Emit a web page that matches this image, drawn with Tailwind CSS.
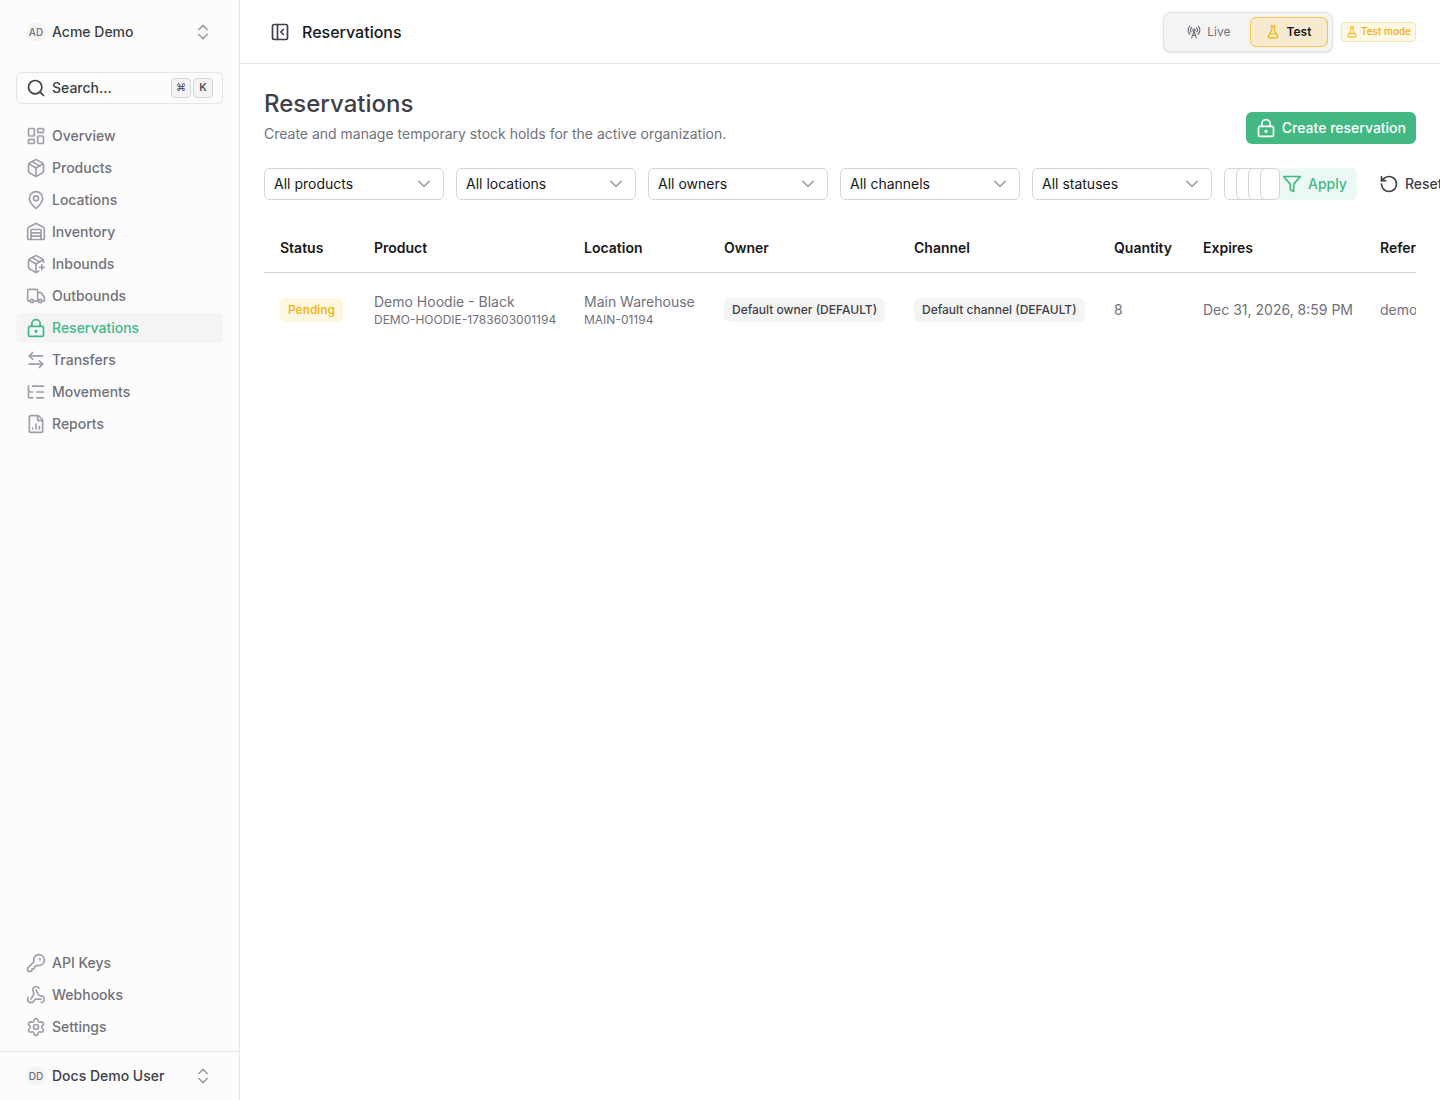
<!DOCTYPE html>
<html lang="en">
  <head>
    <meta charset="UTF-8" />
    <meta name="viewport" content="width=device-width, initial-scale=1.0" />
    <title>Reservations - Acme Demo</title>
    <script src="https://cdn.jsdelivr.net/npm/@tailwindcss/browser@4"></script>
  </head>

  <body class="flex h-screen overflow-hidden bg-white font-['Inter',sans-serif] text-sm text-zinc-500">
    <!-- Icon sprite -->
    <svg class="hidden" aria-hidden="true">
      <symbol id="chevrons" viewBox="0 0 24 24"><path d="m7 15 5 5 5-5" /><path d="m7 9 5-5 5 5" /></symbol>
      <symbol id="lock" viewBox="0 0 24 24"><circle cx="12" cy="16" r="1" /><rect x="3" y="10" width="18" height="12" rx="2" /><path d="M7 10V7a5 5 0 0 1 10 0v3" /></symbol>
      <symbol id="flask" viewBox="0 0 24 24"><path d="M14 2v6a2 2 0 0 0 .245.96l5.51 10.08A2 2 0 0 1 18 22H6a2 2 0 0 1-1.755-2.96l5.51-10.08A2 2 0 0 0 10 8V2" /><path d="M6.453 15h11.094" /><path d="M8.5 2h7" /></symbol>
      <symbol id="chevron-down" viewBox="0 0 24 24"><path d="m6 9 6 6 6-6" /></symbol>
    </svg>

    <!-- Sidebar -->
    <aside class="flex w-60 shrink-0 flex-col border-r border-zinc-200 bg-[#fcfcfc] font-medium">
      <div class="flex h-16 items-center px-4">
        <button type="button" class="flex w-full items-center gap-1.5 px-2.5 py-1.5 text-zinc-700">
          <span class="flex size-5 items-center justify-center rounded-full bg-zinc-100 text-[10px] text-zinc-500">AD</span>
          <span class="flex-1 text-left">Acme Demo</span>
          <svg class="size-5 fill-none stroke-zinc-400 stroke-2" stroke-linecap="round" stroke-linejoin="round"><use href="#chevrons" /></svg>
        </button>
      </div>

      <div class="flex flex-1 flex-col gap-4 px-4 py-2">
        <button type="button" class="flex h-8 items-center gap-1.5 rounded-md border border-zinc-200 px-[9px] text-zinc-700">
          <svg class="size-5 fill-none stroke-current stroke-2" stroke-linecap="round" stroke-linejoin="round" viewBox="0 0 24 24"><circle cx="11" cy="11" r="8" /><path d="m21 21-4.34-4.34" /></svg>
          <span class="flex-1 text-left">Search...</span>
          <span class="flex gap-0.5">
            <kbd class="flex size-5 items-center justify-center rounded-sm border border-zinc-300 bg-zinc-100 font-['DejaVu_Sans',sans-serif] text-[10px]">⌘</kbd>
            <kbd class="flex size-5 items-center justify-center rounded-sm border border-zinc-300 bg-zinc-100 font-['Inter',sans-serif] text-[11px]">K</kbd>
          </span>
        </button>

        <nav class="flex flex-col gap-0.5 pt-px">
          <a href="#" class="flex h-[30px] items-center gap-1.5 rounded-md px-2.5">
            <svg class="size-5 fill-none stroke-zinc-400 stroke-2" stroke-linecap="round" stroke-linejoin="round" viewBox="0 0 24 24"><rect width="7" height="9" x="3" y="3" rx="1" /><rect width="7" height="5" x="14" y="3" rx="1" /><rect width="7" height="9" x="14" y="12" rx="1" /><rect width="7" height="5" x="3" y="16" rx="1" /></svg>
            Overview
          </a>
          <a href="#" class="flex h-[30px] items-center gap-1.5 rounded-md px-2.5">
            <svg class="size-5 fill-none stroke-zinc-400 stroke-2" stroke-linecap="round" stroke-linejoin="round" viewBox="0 0 24 24"><path d="M11 21.73a2 2 0 0 0 2 0l7-4A2 2 0 0 0 21 16V8a2 2 0 0 0-1-1.73l-7-4a2 2 0 0 0-2 0l-7 4A2 2 0 0 0 3 8v8a2 2 0 0 0 1 1.73z" /><path d="M12 22V12" /><path d="M3.29 7 12 12l8.71-5" /><path d="m7.5 4.27 9 5.15" /></svg>
            Products
          </a>
          <a href="#" class="flex h-[30px] items-center gap-1.5 rounded-md px-2.5">
            <svg class="size-5 fill-none stroke-zinc-400 stroke-2" stroke-linecap="round" stroke-linejoin="round" viewBox="0 0 24 24"><path d="M20 10c0 4.993-5.539 10.193-7.399 11.799a1 1 0 0 1-1.202 0C9.539 20.193 4 14.993 4 10a8 8 0 0 1 16 0" /><circle cx="12" cy="10" r="3" /></svg>
            Locations
          </a>
          <a href="#" class="flex h-[30px] items-center gap-1.5 rounded-md px-2.5">
            <svg class="size-5 fill-none stroke-zinc-400 stroke-2" stroke-linecap="round" stroke-linejoin="round" viewBox="0 0 24 24"><path d="M18 21V10a1 1 0 0 0-1-1H7a1 1 0 0 0-1 1v11" /><path d="M22 19a2 2 0 0 1-2 2H4a2 2 0 0 1-2-2V8a2 2 0 0 1 1.132-1.803l7.95-3.974a2 2 0 0 1 1.837 0l7.948 3.974A2 2 0 0 1 22 8z" /><path d="M6 13h12" /><path d="M6 17h12" /></svg>
            Inventory
          </a>
          <a href="#" class="flex h-[30px] items-center gap-1.5 rounded-md px-2.5">
            <svg class="size-5 fill-none stroke-zinc-400 stroke-2" stroke-linecap="round" stroke-linejoin="round" viewBox="0 0 24 24"><path d="M16 16h6" /><path d="M19 13v6" /><path d="M21 10V8a2 2 0 0 0-1-1.73l-7-4a2 2 0 0 0-2 0l-7 4A2 2 0 0 0 3 8v8a2 2 0 0 0 1 1.73l7 4a2 2 0 0 0 2 0l2-1.14" /><path d="m7.5 4.27 9 5.15" /><path d="M3.29 7 12 12l8.71-5" /><path d="M12 22V12" /></svg>
            Inbounds
          </a>
          <a href="#" class="flex h-[30px] items-center gap-1.5 rounded-md px-2.5">
            <svg class="size-5 fill-none stroke-zinc-400 stroke-2" stroke-linecap="round" stroke-linejoin="round" viewBox="0 0 24 24"><path d="M14 18V6a2 2 0 0 0-2-2H4a2 2 0 0 0-2 2v11a1 1 0 0 0 1 1h2" /><path d="M15 18H9" /><path d="M19 18h2a1 1 0 0 0 1-1v-3.65a1 1 0 0 0-.22-.624l-3.48-4.35A1 1 0 0 0 17.52 8H14" /><circle cx="17" cy="18" r="2" /><circle cx="7" cy="18" r="2" /></svg>
            Outbounds
          </a>
          <a href="#" aria-current="page" class="flex h-[30px] items-center gap-1.5 rounded-md bg-zinc-100 px-2.5 text-[#42b883]">
            <svg class="size-5 fill-none stroke-current stroke-2" stroke-linecap="round" stroke-linejoin="round"><use href="#lock" /></svg>
            Reservations
          </a>
          <a href="#" class="flex h-[30px] items-center gap-1.5 rounded-md px-2.5">
            <svg class="size-5 fill-none stroke-zinc-400 stroke-2" stroke-linecap="round" stroke-linejoin="round" viewBox="0 0 24 24"><path d="M8 3 4 7l4 4" /><path d="M4 7h16" /><path d="m16 21 4-4-4-4" /><path d="M20 17H4" /></svg>
            Transfers
          </a>
          <a href="#" class="flex h-[30px] items-center gap-1.5 rounded-md px-2.5">
            <svg class="size-5 fill-none stroke-zinc-400 stroke-2" stroke-linecap="round" stroke-linejoin="round" viewBox="0 0 24 24"><path d="M8 5h13" /><path d="M13 12h8" /><path d="M13 19h8" /><path d="M3 10a2 2 0 0 0 2 2h3" /><path d="M3 5v12a2 2 0 0 0 2 2h3" /></svg>
            Movements
          </a>
          <a href="#" class="flex h-[30px] items-center gap-1.5 rounded-md px-2.5">
            <svg class="size-5 fill-none stroke-zinc-400 stroke-2" stroke-linecap="round" stroke-linejoin="round" viewBox="0 0 24 24"><path d="M6 22a2 2 0 0 1-2-2V4a2 2 0 0 1 2-2h8a2.4 2.4 0 0 1 1.704.706l3.588 3.588A2.4 2.4 0 0 1 20 8v12a2 2 0 0 1-2 2z" /><path d="M14 2v5a1 1 0 0 0 1 1h5" /><path d="M8 18v-1" /><path d="M12 18v-6" /><path d="M16 18v-3" /></svg>
            Reports
          </a>
        </nav>

        <nav class="mt-auto flex flex-col gap-0.5 pb-px">
          <a href="#" class="flex h-[30px] items-center gap-1.5 rounded-md px-2.5">
            <svg class="size-5 fill-none stroke-zinc-400 stroke-2" stroke-linecap="round" stroke-linejoin="round" viewBox="0 0 24 24"><path d="M2.586 17.414A2 2 0 0 0 2 18.828V21a1 1 0 0 0 1 1h3a1 1 0 0 0 1-1v-1a1 1 0 0 1 1-1h1a1 1 0 0 0 1-1v-1a1 1 0 0 1 1-1h.172a2 2 0 0 0 1.414-.586l.814-.814a6.5 6.5 0 1 0-4-4z" /><circle cx="16.5" cy="7.5" r=".5" /></svg>
            API Keys
          </a>
          <a href="#" class="flex h-[30px] items-center gap-1.5 rounded-md px-2.5">
            <svg class="size-5 fill-none stroke-zinc-400 stroke-2" stroke-linecap="round" stroke-linejoin="round" viewBox="0 0 24 24"><path d="M18 16.98h-5.99c-1.1 0-1.95.94-2.48 1.9A4 4 0 0 1 2 17c.01-.7.2-1.4.57-2" /><path d="m6 17 3.13-5.78c.53-.97.1-2.18-.5-3.1a4 4 0 1 1 6.89-4.06" /><path d="m12 6 3.13 5.73C15.66 12.7 16.9 13 18 13a4 4 0 0 1 0 8" /></svg>
            Webhooks
          </a>
          <a href="#" class="flex h-[30px] items-center gap-1.5 rounded-md px-2.5">
            <svg class="size-5 fill-none stroke-zinc-400 stroke-2" stroke-linecap="round" stroke-linejoin="round" viewBox="0 0 24 24"><path d="M9.671 4.136a2.34 2.34 0 0 1 4.659 0 2.34 2.34 0 0 0 3.319 1.915 2.34 2.34 0 0 1 2.33 4.033 2.34 2.34 0 0 0 0 3.831 2.34 2.34 0 0 1-2.33 4.033 2.34 2.34 0 0 0-3.319 1.915 2.34 2.34 0 0 1-4.659 0 2.34 2.34 0 0 0-3.32-1.915 2.34 2.34 0 0 1-2.33-4.033 2.34 2.34 0 0 0 0-3.831A2.34 2.34 0 0 1 6.35 6.051a2.34 2.34 0 0 0 3.319-1.915" /><circle cx="12" cy="12" r="3" /></svg>
            Settings
          </a>
        </nav>
      </div>

      <div class="border-t border-zinc-200 px-4 py-2">
        <button type="button" class="flex w-full items-center gap-1.5 px-2.5 py-1.5 text-zinc-700">
          <span class="flex size-5 items-center justify-center rounded-full bg-zinc-100 text-[10px] text-zinc-500">DD</span>
          <span class="flex-1 text-left">Docs Demo User</span>
          <svg class="size-5 fill-none stroke-zinc-400 stroke-2" stroke-linecap="round" stroke-linejoin="round"><use href="#chevrons" /></svg>
        </button>
      </div>
    </aside>

    <div class="flex min-w-0 flex-1 flex-col">
      <!-- Top bar -->
      <header class="flex h-16 shrink-0 items-center justify-between border-b border-zinc-200 px-6">
        <div class="flex items-center gap-1.5">
          <button type="button" aria-label="Collapse sidebar" class="p-1.5">
            <svg class="size-5 fill-none stroke-zinc-700 stroke-2" stroke-linecap="round" stroke-linejoin="round" viewBox="0 0 24 24"><rect width="18" height="18" x="3" y="3" rx="2" /><path d="M9 3v18" /><path d="m16 15-3-3 3-3" /></svg>
          </button>
          <p class="text-base font-medium text-zinc-900">Reservations</p>
        </div>
        <div class="flex items-center gap-2 text-xs">
          <div class="flex rounded-lg border border-zinc-200 bg-zinc-100 p-1 shadow-sm">
            <button type="button" class="flex h-[30px] w-[82px] items-center justify-center gap-1.5">
              <svg class="size-3.5 fill-none stroke-current stroke-2" stroke-linecap="round" stroke-linejoin="round" viewBox="0 0 24 24"><path d="M4.9 16.1C1 12.2 1 5.8 4.9 1.9" /><path d="M7.8 4.7a6.14 6.14 0 0 0-.8 7.5" /><circle cx="12" cy="9" r="2" /><path d="M16.2 4.8c2 2 2.26 5.11.8 7.47" /><path d="M19.1 1.9a9.96 9.96 0 0 1 0 14.1" /><path d="M9.5 18h5" /><path d="m8 22 4-11 4 11" /></svg>
              Live
            </button>
            <button type="button" class="flex h-[30px] w-[78px] items-center justify-center gap-1.5 rounded-md border border-[#f3c54b] bg-[#f6ebd0] font-semibold text-zinc-900">
              <svg class="size-3.5 fill-none stroke-[#f0b100] stroke-2" stroke-linecap="round" stroke-linejoin="round"><use href="#flask" /></svg>
              Test
            </button>
          </div>
          <span class="flex h-5 items-center gap-[3px] rounded-sm border border-[#fae5a8] bg-[#fef8e6] px-1 text-[10px] font-medium text-[#f0b100]">
            <svg class="size-3 fill-none stroke-current stroke-2" stroke-linecap="round" stroke-linejoin="round"><use href="#flask" /></svg>
            Test mode
          </span>
        </div>
      </header>

      <main class="flex flex-col gap-6 overflow-hidden p-6">
        <div class="flex items-end justify-between">
          <div>
            <h1 class="text-2xl font-medium text-zinc-700">Reservations</h1>
            <p class="mt-1">Create and manage temporary stock holds for the active organization.</p>
          </div>
          <button type="button" class="flex h-8 items-center gap-1.5 rounded-md bg-[#42b883] px-2.5 font-medium text-white">
            <svg class="size-5 fill-none stroke-current stroke-2" stroke-linecap="round" stroke-linejoin="round"><use href="#lock" /></svg>
            Create reservation
          </button>
        </div>

        <!-- Filters -->
        <form class="flex gap-3">
          <label class="relative w-[180px] shrink-0">
            <select aria-label="Product" class="h-8 w-full appearance-none rounded-md border border-zinc-300 bg-white px-[9px] text-zinc-900"><option>All products</option></select>
            <svg class="pointer-events-none absolute top-1.5 right-2.5 size-5 fill-none stroke-zinc-400 stroke-2" stroke-linecap="round" stroke-linejoin="round"><use href="#chevron-down" /></svg>
          </label>
          <label class="relative w-[180px] shrink-0">
            <select aria-label="Location" class="h-8 w-full appearance-none rounded-md border border-zinc-300 bg-white px-[9px] text-zinc-900"><option>All locations</option></select>
            <svg class="pointer-events-none absolute top-1.5 right-2.5 size-5 fill-none stroke-zinc-400 stroke-2" stroke-linecap="round" stroke-linejoin="round"><use href="#chevron-down" /></svg>
          </label>
          <label class="relative w-[180px] shrink-0">
            <select aria-label="Owner" class="h-8 w-full appearance-none rounded-md border border-zinc-300 bg-white px-[9px] text-zinc-900"><option>All owners</option></select>
            <svg class="pointer-events-none absolute top-1.5 right-2.5 size-5 fill-none stroke-zinc-400 stroke-2" stroke-linecap="round" stroke-linejoin="round"><use href="#chevron-down" /></svg>
          </label>
          <label class="relative w-[180px] shrink-0">
            <select aria-label="Channel" class="h-8 w-full appearance-none rounded-md border border-zinc-300 bg-white px-[9px] text-zinc-900"><option>All channels</option></select>
            <svg class="pointer-events-none absolute top-1.5 right-2.5 size-5 fill-none stroke-zinc-400 stroke-2" stroke-linecap="round" stroke-linejoin="round"><use href="#chevron-down" /></svg>
          </label>
          <label class="relative w-[180px] shrink-0">
            <select aria-label="Status" class="h-8 w-full appearance-none rounded-md border border-zinc-300 bg-white px-[9px] text-zinc-900"><option>All statuses</option></select>
            <svg class="pointer-events-none absolute top-1.5 right-2.5 size-5 fill-none stroke-zinc-400 stroke-2" stroke-linecap="round" stroke-linejoin="round"><use href="#chevron-down" /></svg>
          </label>
          <div class="z-10 w-0"><input type="text" aria-label="Reference type" class="h-8 w-5 rounded-md border border-zinc-300 bg-white px-2" /></div>
          <div class="z-10 w-0"><input type="text" aria-label="Reference ID" class="h-8 w-5 rounded-md border border-zinc-300 bg-white px-2" /></div>
          <div class="z-10 w-0"><input type="text" aria-label="Expires from" class="h-8 w-5 rounded-md border border-zinc-300 bg-white px-2" /></div>
          <div class="z-10 w-0"><input type="text" aria-label="Expires to" class="h-8 w-5 rounded-md border border-zinc-300 bg-white px-2" /></div>
          <button type="submit" class="flex h-8 shrink-0 items-center gap-1.5 rounded-md bg-[#ecf8f3] px-2.5 font-medium text-[#42b883]">
            <svg class="size-5 fill-none stroke-current stroke-2" stroke-linecap="round" stroke-linejoin="round" viewBox="0 0 24 24"><path d="M22 3H2l8 9.46V19l4 2v-8.54z" /></svg>
            Apply
          </button>
          <button type="reset" class="flex h-8 shrink-0 items-center gap-1.5 rounded-md px-2.5 font-medium text-zinc-700">
            <svg class="size-5 fill-none stroke-current stroke-2" stroke-linecap="round" stroke-linejoin="round" viewBox="0 0 24 24"><path d="M3 12a9 9 0 1 0 9-9 9.75 9.75 0 0 0-6.74 2.74L3 8" /><path d="M3 3v5h5" /></svg>
            Reset
          </button>
        </form>

        <!-- Reservations table -->
        <div class="overflow-x-auto [scrollbar-width:none]">
          <table class="w-[1300px] table-fixed text-left whitespace-nowrap">
            <thead class="border-b border-zinc-300 text-zinc-900">
              <tr class="h-12">
                <th class="w-[94px] px-4 font-semibold">Status</th>
                <th class="w-[210px] px-4 font-semibold">Product</th>
                <th class="w-[140px] px-4 font-semibold">Location</th>
                <th class="w-[190px] px-4 font-semibold">Owner</th>
                <th class="w-[200px] px-4 font-semibold">Channel</th>
                <th class="w-[89px] px-4 font-semibold">Quantity</th>
                <th class="w-[177px] px-4 font-semibold">Expires</th>
                <th class="px-4 font-semibold">Reference</th>
              </tr>
            </thead>
            <tbody>
              <tr>
                <td class="px-4"><span class="inline-flex h-6 items-center rounded-md bg-[#fef7e0] px-2 text-xs font-medium text-[#f0b100]">Pending</span></td>
                <td class="px-4 py-[19px]">
                  <p>Demo Hoodie - Black</p>
                  <p class="text-xs">DEMO-HOODIE-1783603001194</p>
                </td>
                <td class="px-4">
                  <p>Main Warehouse</p>
                  <p class="text-xs">MAIN-01194</p>
                </td>
                <td class="px-4"><span class="inline-flex h-6 items-center rounded-md bg-zinc-100 px-2 text-xs font-medium text-zinc-700">Default owner (DEFAULT)</span></td>
                <td class="px-4"><span class="inline-flex h-6 items-center rounded-md bg-zinc-100 px-2 text-xs font-medium text-zinc-700">Default channel (DEFAULT)</span></td>
                <td class="px-4">8</td>
                <td class="px-4">Dec 31, 2026, 8:59 PM</td>
                <td class="px-4">demo-order</td>
              </tr>
            </tbody>
          </table>
        </div>
      </main>
    </div>
  </body>
</html>
